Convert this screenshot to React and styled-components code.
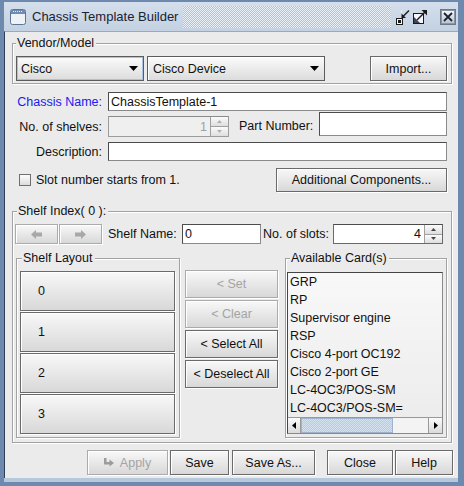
import React from 'react';
import styled, { createGlobalStyle } from 'styled-components';

const BG = '#ebebeb';

const GlobalStyle = createGlobalStyle`
  html, body { margin: 0; padding: 0; background: #fff; }
  body {
    font-family: "Liberation Sans", Arial, sans-serif;
    font-size: 12.5px;
    color: #111;
  }
`;

const Frame = styled.div`
  width: 464px;
  height: 486px;
  box-sizing: border-box;
  display: flex;
  flex-direction: column;
  padding: 2px 6px 8px 4px;
  background: #6d89ad;
`;

const TitleBar = styled.div`
  height: 29px;
  flex: none;
  display: flex;
  align-items: center;
  padding: 0 2px 0 6px;
  background: linear-gradient(#d5dfec, #c3d1e2);
`;

const TitleText = styled.div`
  margin-left: 6px;
  font-size: 13px;
  color: #1b2230;
  white-space: nowrap;
`;

const Dots = styled.div`
  flex: 1;
  height: 22px;
  margin: 0 4px 0 5px;
  background-color: #b1c2d8;
  background-image: repeating-conic-gradient(#eaf0f7 0 25%, transparent 0 50%);
  background-size: 2px 2px;
`;

const TitleIcon = styled.svg`
  flex: none;
  display: block;
  margin-left: ${p => p.$ml || 0}px;
`;

const Content = styled.div`
  flex: 1;
  display: flex;
  flex-direction: column;
  background: ${BG};
  border-left: 1px solid #2f4058;
  border-top: 1px solid #98aac1;
  padding: 11px 6px 0 7px;
  box-shadow: 0 4px 0 #b8c8dc;
`;

const Group = styled.div`
  display: flex;
  flex-direction: column;
  flex: none;
  width: ${p => (p.$w ? `${p.$w}px` : 'auto')};
  box-sizing: border-box;
  border: 1px solid #a2a2a2;
  box-shadow: inset 1px 1px 0 #fff, 1px 1px 0 #fff;
  padding: ${p => p.$pad || '0 3px 2px 3px'};
  margin-top: ${p => p.$mt || 0}px;
  margin-left: ${p => p.$ml || 0}px;
`;

const GroupTitle = styled.div`
  align-self: flex-start;
  height: 14px;
  line-height: 14px;
  margin: -8px 0 0 ${p => p.$indent || 0}px;
  padding: 0 2px 0 1px;
  background: ${BG};
  white-space: nowrap;
`;

const Row = styled.div`
  display: flex;
  align-items: ${p => p.$align || 'center'};
  gap: ${p => p.$gap || 0}px;
  margin-top: ${p => p.$mt || 0}px;
  margin-right: ${p => p.$mr || 0}px;
  margin-left: ${p => p.$ml || 0}px;
  justify-content: ${p => p.$justify || 'flex-start'};
`;

const Spacer = styled.div`
  flex: 1;
`;

const Combo = styled.div`
  width: ${p => p.$w}px;
  height: 25px;
  box-sizing: border-box;
  display: flex;
  align-items: center;
  justify-content: space-between;
  padding: 0 5px 0 ${p => p.$pl || 4}px;
  border: 1px solid #5c5c5c;
  background: linear-gradient(#fbfbfb, #dcdcdc);
  box-shadow: ${p => (p.$focus ? 'inset 0 0 0 1px #a9c2df' : 'inset 1px 1px 0 #fff')};
`;

const Button = styled.button`
  width: ${p => p.$w}px;
  height: ${p => p.$h || 25}px;
  flex: none;
  box-sizing: border-box;
  margin: 0;
  padding: 0 ${p => p.$px || 0}px;
  font: inherit;
  color: #111;
  display: flex;
  align-items: center;
  justify-content: ${p => p.$justify || 'center'};
  gap: 6px;
  border: 1px solid #6a6a6a;
  background: linear-gradient(#f8f8f8, #d8d8d8);
  box-shadow: inset 1px 1px 0 #fff, 1px 1px 0 #fff;
  &:disabled {
    color: #a4a4a4;
    border-color: #ababab;
  }
`;

const FieldLabel = styled.div`
  flex: none;
  width: ${p => (p.$w ? `${p.$w}px` : 'auto')};
  text-align: ${p => p.$textAlign || 'right'};
  color: ${p => (p.$blue ? '#1a1af2' : '#111')};
  white-space: nowrap;
  margin-top: ${p => p.$mt || 0}px;
  margin-left: ${p => p.$ml || 0}px;
  margin-right: ${p => p.$mr || 0}px;
  line-height: 14px;
`;

const TextField = styled.input`
  box-sizing: border-box;
  width: ${p => (p.$w ? `${p.$w}px` : 'auto')};
  flex: ${p => (p.$w ? 'none' : '1')};
  min-width: 0;
  height: ${p => p.$h || 19}px;
  margin: 0;
  padding: 0 2px;
  font: inherit;
  color: #111;
  background: #fff;
  border: 1px solid #8a8a8a;
  border-top-color: #4c4c4c;
  border-left-color: #4c4c4c;
  outline: none;
`;

const Spinner = styled.div`
  display: flex;
  flex: none;
  width: ${p => p.$w}px;
  height: ${p => p.$h}px;
  margin-top: ${p => p.$mt || 0}px;
  box-sizing: border-box;
  border: 1px solid ${p => (p.$disabled ? '#9c9c9c' : '#6a6a6a')};
  border-top-color: ${p => (p.$disabled ? '#8a8a8a' : '#4c4c4c')};
`;

const SpinValue = styled.div`
  flex: 1;
  display: flex;
  align-items: center;
  justify-content: flex-end;
  padding-right: 3px;
  background: ${p => (p.$disabled ? '#efefef' : '#fff')};
  color: ${p => (p.$disabled ? '#a0a0a0' : '#111')};
`;

const SpinButtons = styled.div`
  width: 17px;
  display: flex;
  flex-direction: column;
  border-left: 1px solid #a0a0a0;
`;

const SpinButton = styled.div`
  flex: 1;
  display: flex;
  align-items: center;
  justify-content: center;
  background: linear-gradient(#fbfbfb, #dedede);
  & + & {
    border-top: 1px solid #a0a0a0;
  }
`;

const CheckBox = styled.div`
  width: 12px;
  height: 12px;
  box-sizing: border-box;
  flex: none;
  margin-left: 7px;
  border: 1px solid #707070;
  background: linear-gradient(#fdfdfd, #dcdcdc);
`;

const Column = styled.div`
  display: flex;
  flex-direction: column;
  gap: ${p => p.$gap || 0}px;
  margin-top: ${p => p.$mt || 0}px;
  margin-left: ${p => p.$ml || 0}px;
`;

const ListBox = styled.div`
  width: 156px;
  height: 162px;
  box-sizing: border-box;
  margin-top: 7px;
  display: flex;
  flex-direction: column;
  border: 1px solid #8a8a8a;
  border-top-color: #444;
  border-left-color: #444;
  background: linear-gradient(#f8f8f8, #ebebeb);
`;

const ListItem = styled.div`
  height: 18px;
  line-height: 18px;
  padding-left: 2px;
  white-space: nowrap;
`;

const ScrollBar = styled.div`
  margin-top: auto;
  height: 16px;
  display: flex;
  border-top: 1px solid #9a9a9a;
  box-sizing: border-box;
`;

const ScrollArrow = styled.div`
  width: ${p => p.$w}px;
  display: flex;
  align-items: center;
  justify-content: center;
  box-sizing: border-box;
  background: linear-gradient(#fbfbfb, #dadada);
  border-left: ${p => (p.$right ? '1px solid #9a9a9a' : 'none')};
  border-right: ${p => (p.$right ? 'none' : '1px solid #9a9a9a')};
`;

const ScrollThumb = styled.div`
  width: 92px;
  box-sizing: border-box;
  border: 1px solid #9fb4cc;
  background-color: #b7cbe2;
  background-image: repeating-conic-gradient(#d4e1ef 0 25%, transparent 0 50%);
  background-size: 2px 2px;
`;

const ScrollTrack = styled.div`
  flex: 1;
  background: #f3f3f3;
`;

const Tri = ({ dir = 'down', color = '#000', w = 9, h = 5 }) => {
  const pts = {
    down: `0,0 ${w},0 ${w / 2},${h}`,
    up: `0,${h} ${w},${h} ${w / 2},0`,
    left: `${w},0 ${w},${h} 0,${h / 2}`,
    right: `0,0 0,${h} ${w},${h / 2}`,
  }[dir];
  return (
    <svg width={w} height={h} viewBox={`0 0 ${w} ${h}`} style={{ display: 'block' }}>
      <polygon points={pts} fill={color} />
    </svg>
  );
};

const NavArrow = ({ left }) => (
  <svg width="11" height="9" viewBox="0 0 11 9" style={{ display: 'block' }}>
    <polygon
      points={left ? '0,4.5 5,0 5,2.5 11,2.5 11,6.5 5,6.5 5,9' : '11,4.5 6,0 6,2.5 0,2.5 0,6.5 6,6.5 6,9'}
      fill="#a8a8a8"
    />
  </svg>
);

const ApplyIcon = () => (
  <svg width="10" height="9" viewBox="0 0 10 9" style={{ display: 'block' }}>
    <polygon points="0,0 2.5,0 2.5,4 5.5,4 5.5,1.5 10,5 5.5,8.5 5.5,6.5 0,6.5" fill="#9c9c9c" />
  </svg>
);

const WindowIcon = () => (
  <TitleIcon width="16" height="16" viewBox="0 0 16 16">
    <rect x="0.5" y="0.5" width="15" height="15" rx="2" fill="#eef2f7" stroke="#5d7597" />
    <rect x="1" y="1" width="14" height="4" fill="#6f8db3" />
    <g fill="#e8eef6">
      <rect x="3" y="2" width="1" height="1" />
      <rect x="5" y="2" width="1" height="1" />
      <rect x="7" y="2" width="1" height="1" />
      <rect x="9" y="2" width="1" height="1" />
      <rect x="11" y="2" width="1" height="1" />
    </g>
  </TitleIcon>
);

const IconifyIcon = () => (
  <TitleIcon width="16" height="16" viewBox="0 0 16 16">
    <rect x="1.5" y="9.5" width="6" height="6" fill="#f4f6f9" stroke="#1a1a1a" />
    <rect x="3" y="11" width="3" height="3" fill="#1a1a1a" />
    <path d="M14 1.5 L8 7.5" stroke="#1a1a1a" strokeWidth="1.4" />
    <polygon points="6.5,9 6.5,4.5 11,9" fill="#1a1a1a" />
    <path d="M6.5 3.5 V1.5" stroke="#f4f6f9" strokeWidth="1" />
  </TitleIcon>
);

const MaximizeIcon = () => (
  <TitleIcon width="16" height="16" viewBox="0 0 16 16" $ml={1}>
    <rect x="1.5" y="4.5" width="10" height="10" fill="#f4f6f9" stroke="#1a1a1a" />
    <polygon points="2,14 2,8 8,14" fill="#3c4656" />
    <path d="M5 11 L13 3" stroke="#1a1a1a" strokeWidth="1.4" />
    <polygon points="15,1 15,6.5 9.5,1" fill="#1a1a1a" />
  </TitleIcon>
);

const CloseIcon = () => (
  <TitleIcon width="16" height="16" viewBox="0 0 16 16" $ml={12}>
    <defs>
      <linearGradient id="cg" x1="0" y1="0" x2="0" y2="1">
        <stop offset="0" stopColor="#f2f5f9" />
        <stop offset="1" stopColor="#b9c6d6" />
      </linearGradient>
    </defs>
    <rect x="0.5" y="0.5" width="15" height="15" fill="#8a96a6" stroke="#6c7888" />
    <rect x="2" y="2" width="12" height="12" fill="url(#cg)" />
    <path d="M4 4 L12 12 M12 4 L4 12" stroke="#1b2230" strokeWidth="1.8" />
  </TitleIcon>
);

const cards = [
  'GRP',
  'RP',
  'Supervisor engine',
  'RSP',
  'Cisco 4-port OC192',
  'Cisco 2-port GE',
  'LC-4OC3/POS-SM',
  'LC-4OC3/POS-SM=',
];

const shelves = ['0', '1', '2', '3'];

export default function App() {
  return (
    <>
      <GlobalStyle />
      <Frame>
        <TitleBar>
          <WindowIcon />
          <TitleText>Chassis Template Builder</TitleText>
          <Dots />
          <IconifyIcon />
          <MaximizeIcon />
          <CloseIcon />
        </TitleBar>

        <Content>
          <Group>
            <GroupTitle>Vendor/Model</GroupTitle>
            <Row $mt={6} $gap={3}>
              <Combo $w={128} $focus>
                <span>Cisco</span>
                <Tri />
              </Combo>
              <Combo $w={178} $pl={5}>
                <span>Cisco Device</span>
                <Tri />
              </Combo>
              <Spacer />
              <Button $w={77} style={{ marginRight: 1 }}>Import...</Button>
            </Row>
          </Group>

          <Row $mt={8} $mr={5} $gap={6}>
            <FieldLabel $w={90} $blue>Chassis Name:</FieldLabel>
            <TextField defaultValue="ChassisTemplate-1" />
          </Row>

          <Row $mt={1} $mr={5} $align="flex-start">
            <FieldLabel $w={90} $mt={8} $mr={6}>No. of shelves:</FieldLabel>
            <Spinner $w={121} $h={21} $mt={4} $disabled>
              <SpinValue $disabled>1</SpinValue>
              <SpinButtons>
                <SpinButton><Tri dir="up" w={5} h={3} color="#b0b0b0" /></SpinButton>
                <SpinButton><Tri dir="down" w={5} h={3} color="#b0b0b0" /></SpinButton>
              </SpinButtons>
            </Spinner>
            <FieldLabel $mt={7} $ml={10} $mr={6}>Part Number:</FieldLabel>
            <TextField $h={24} />
          </Row>

          <Row $mt={5} $mr={5} $gap={6}>
            <FieldLabel $w={90}>Description:</FieldLabel>
            <TextField />
          </Row>

          <Row $mt={7} $mr={5}>
            <CheckBox />
            <FieldLabel $ml={5}>Slot number starts from 1.</FieldLabel>
            <Spacer />
            <Button $w={171} $h={24}>Additional Components...</Button>
          </Row>

          <Group $mt={19} $pad="0 4px 4px 2px">
            <GroupTitle $indent={2}>Shelf Index( 0 ):</GroupTitle>
            <Row $mt={6}>
              <Button $w={43} $h={20} disabled>
                <NavArrow left />
              </Button>
              <Button $w={43} $h={20} disabled style={{ marginLeft: 1 }}>
                <NavArrow />
              </Button>
              <FieldLabel $w={74} $textAlign="left" $ml={6}>Shelf Name:</FieldLabel>
              <TextField $w={79} $h={20} defaultValue="0" />
              <FieldLabel $w={70} $textAlign="left" $ml={2}>No. of slots:</FieldLabel>
              <Spinner $w={110} $h={20}>
                <SpinValue>4</SpinValue>
                <SpinButtons>
                  <SpinButton><Tri dir="up" w={5} h={3} color="#444" /></SpinButton>
                  <SpinButton><Tri dir="down" w={5} h={3} color="#444" /></SpinButton>
                </SpinButtons>
              </Spinner>
            </Row>

            <Row $mt={14} $ml={1} $align="flex-start">
              <Group $w={164} $pad="0 3px 3px 3px">
                <GroupTitle $indent={2}>Shelf Layout</GroupTitle>
                <Column $mt={6} $gap={1}>
                  {shelves.map(s => (
                    <Button key={s} $w={155} $h={40} $justify="flex-start" $px={17}>
                      {s}
                    </Button>
                  ))}
                </Column>
              </Group>

              <Column $mt={12} $ml={5} $gap={2}>
                <Button $w={93} $h={28} disabled>&lt; Set</Button>
                <Button $w={93} $h={28} disabled>&lt; Clear</Button>
                <Button $w={93} $h={28}>&lt; Select All</Button>
                <Button $w={93} $h={28}>&lt; Deselect All</Button>
              </Column>

              <Group $w={162} $ml={7} $pad="0 3px 3px 1px">
                <GroupTitle $indent={3}>Available Card(s)</GroupTitle>
                <ListBox>
                  {cards.map(c => (
                    <ListItem key={c}>{c}</ListItem>
                  ))}
                  <ScrollBar>
                    <ScrollArrow $w={13}><Tri dir="left" w={4} h={7} /></ScrollArrow>
                    <ScrollThumb />
                    <ScrollTrack />
                    <ScrollArrow $w={14} $right><Tri dir="right" w={4} h={7} /></ScrollArrow>
                  </ScrollBar>
                </ListBox>
              </Group>
            </Row>
          </Group>

          <Row $mt={7} $justify="flex-end" style={{ marginRight: -1 }}>
            <Button $w={81} disabled>
              <ApplyIcon />
              Apply
            </Button>
            <Button $w={59} style={{ marginLeft: 2 }}>Save</Button>
            <Button $w={83} style={{ marginLeft: 3 }}>Save As...</Button>
            <Button $w={66} style={{ marginLeft: 12 }}>Close</Button>
            <Button $w={58} style={{ marginLeft: 2 }}>Help</Button>
          </Row>
        </Content>
      </Frame>
    </>
  );
}
